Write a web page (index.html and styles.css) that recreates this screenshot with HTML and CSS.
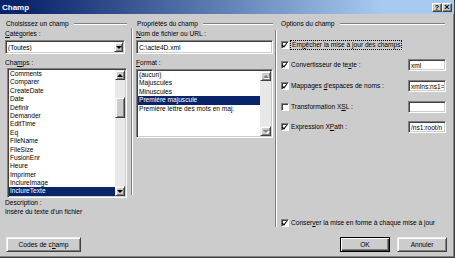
FILE: index.html
```html
<!DOCTYPE html>
<html lang="fr">
<head>
  <meta charset="UTF-8">
  <title>Champ</title>
  <link rel="stylesheet" href="styles.css">
</head>
<body>
  <div class="dialog">
    <div class="titlebar">
      <span class="title">Champ</span>
      <span class="cap-btn">?</span>
      <span class="cap-btn cap-close">×</span>
    </div>

    <div class="content">
      <div class="columns">
        <!-- Choisissez un champ -->
        <div class="col col-left">
          <div class="group-head"><span>Choisissez un champ</span><span class="rule"></span></div>
          <div class="label"><u>C</u>atégories :</div>
          <div class="field select">
            <span class="field-text">(Toutes)</span>
            <span class="btn3d arrow-btn"><span class="tri tri-down"></span></span>
          </div>
          <div class="label label-gap">Cha<u>m</u>ps :</div>
          <div class="listbox list-fields">
            <ul class="items">
              <li>Comments</li>
              <li>Comparer</li>
              <li>CreateDate</li>
              <li>Date</li>
              <li>Définir</li>
              <li>Demander</li>
              <li>EditTime</li>
              <li>Eq</li>
              <li>FileName</li>
              <li>FileSize</li>
              <li>FusionEnr</li>
              <li>Heure</li>
              <li>Imprimer</li>
              <li>InclureImage</li>
              <li class="selected">InclureTexte</li>
            </ul>
            <div class="scrollbar">
              <span class="btn3d sb-btn"><span class="tri tri-up"></span></span>
              <div class="track"><span class="btn3d thumb"></span></div>
              <span class="btn3d sb-btn"><span class="tri tri-down"></span></span>
            </div>
          </div>
          <div class="desc">Description :</div>
          <div class="desc">Insère du texte d'un fichier</div>
        </div>

        <div class="sep sep-left"></div>

        <!-- Propriétés du champ -->
        <div class="col col-mid">
          <div class="group-head"><span>Propriétés du champ</span><span class="rule"></span></div>
          <div class="label"><u>N</u>om de fichier ou URL :</div>
          <div class="field textbox">
            <span class="field-text">C:\acte4D.xml</span>
          </div>
          <div class="label label-gap"><u>F</u>ormat :</div>
          <div class="listbox list-format">
            <ul class="items">
              <li>(aucun)</li>
              <li>Majuscules</li>
              <li>Minuscules</li>
              <li class="selected">Première majuscule</li>
              <li>Première lettre des mots en maj.</li>
            </ul>
            <div class="scrollbar">
              <span class="btn3d sb-btn"><span class="tri tri-up off"></span></span>
              <div class="track"></div>
              <span class="btn3d sb-btn"><span class="tri tri-down off"></span></span>
            </div>
          </div>
        </div>

        <div class="sep sep-right"></div>

        <!-- Options du champ -->
        <div class="col col-right">
          <div class="group-head"><span>Options du champ</span><span class="rule"></span></div>

          <div class="opt opt-first">
            <span class="check on"></span>
            <span class="opt-label focus">Em<u>p</u>êcher la mise à jour des champs</span>
          </div>
          <div class="opt">
            <span class="check on"></span>
            <span class="opt-label">Convertisseur de te<u>x</u>te :</span>
            <span class="field small"><span class="field-text">xml</span></span>
          </div>
          <div class="opt">
            <span class="check on"></span>
            <span class="opt-label">Mappages <u>d</u>'espaces de noms :</span>
            <span class="field small"><span class="field-text">xmlns:ns1=</span></span>
          </div>
          <div class="opt">
            <span class="check"></span>
            <span class="opt-label">Transformation X<u>S</u>L :</span>
            <span class="field small"><span class="field-text"></span></span>
          </div>
          <div class="opt">
            <span class="check on"></span>
            <span class="opt-label">Expression X<u>P</u>ath :</span>
            <span class="field small"><span class="field-text">/ns1:root/n</span></span>
          </div>

          <div class="opt opt-last">
            <span class="check on"></span>
            <span class="opt-label">Conser<u>v</u>er la mise en forme à chaque mise à jour</span>
          </div>
        </div>
      </div>

      <div class="footer">
        <span class="btn3d button btn-codes">Codes de c<u>h</u>amp</span>
        <span class="btn3d button btn-default">OK</span>
        <span class="btn3d button btn-cancel">Annuler</span>
      </div>
    </div>
  </div>
</body>
</html>
```

FILE: styles.css
```css
* {
  box-sizing: border-box;
}

body {
  margin: 0;
  background: #cccccc;
  font-family: "Liberation Sans", Arial, sans-serif;
  font-size: 6.6px;
  color: #000;
}

u {
  text-decoration-thickness: 1px;
  text-underline-offset: 1px;
}

.dialog {
  width: 455px;
  height: 258px;
  background: #cccccc;
  border-right: 1px solid #404040;
  border-bottom: 1px solid #404040;
  box-shadow: inset -1px -1px #808080;
  display: flex;
  flex-direction: column;
}

/* title bar */
.titlebar {
  height: 14px;
  flex-shrink: 0;
  display: flex;
  align-items: center;
  padding: 0 2px 0 2px;
  background: linear-gradient(to right, #0a246a 5%, #a6caf0 84%);
}

.title {
  flex: 1;
  color: #fff;
  font-weight: bold;
  font-size: 8px;
}

.cap-btn {
  width: 10px;
  height: 9px;
  background: #cccccc;
  border: 1px solid;
  border-color: #fff #404040 #404040 #fff;
  box-shadow: inset -1px -1px #808080;
  font-weight: bold;
  font-size: 7px;
  line-height: 7px;
  text-align: center;
}

.cap-close {
  font-size: 9px;
}

/* content */
.content {
  padding: 5px 7px 0 5px;
}

.columns {
  display: flex;
  height: 209px;
}

.col {
  display: flex;
  flex-direction: column;
}

.col-left {
  width: 123px;
}

.col-mid {
  width: 137px;
  margin-left: 3px;
}

.col-right {
  flex: 1;
  margin-left: 3px;
}

.sep {
  width: 2px;
  border-left: 1px solid #808080;
  border-right: 1px solid #fff;
  align-self: flex-start;
}

.sep-left {
  margin-left: 3px;
  margin-top: 9px;
  height: 167px;
}

.sep-right {
  margin-left: 2px;
  margin-top: 11px;
  height: 197px;
}

.group-head {
  display: flex;
  align-items: center;
  height: 9px;
  line-height: 9px;
  padding-left: 1px;
}

.rule {
  flex: 1;
  height: 2px;
  margin-left: 5px;
  border-top: 1px solid #808080;
  border-bottom: 1px solid #fff;
}

.col-left .rule {
  margin-right: 1px;
}

.col-right .rule {
  margin-right: 2px;
}

.label {
  line-height: 9px;
  margin-top: 1px;
}

.label-gap {
  margin-top: 4px;
}

/* sunken fields */
.field {
  display: flex;
  align-items: center;
  background: #fff;
  border: 1px solid;
  border-color: #808080 #fff #fff #808080;
  box-shadow: inset 1px 1px #404040, inset -1px -1px #cccccc;
  padding: 1px;
  overflow: hidden;
  white-space: nowrap;
}

.field-text {
  flex: 1;
  padding-left: 1px;
  overflow: hidden;
}

.select {
  width: 120px;
  height: 14px;
  margin-top: 2px;
}

.textbox {
  width: 137px;
  height: 14px;
  margin-top: 2px;
}

.small {
  width: 38px;
  height: 12px;
  margin-left: auto;
  margin-right: 1px;
}

/* raised 3d parts */
.btn3d {
  display: flex;
  align-items: center;
  justify-content: center;
  background: #cccccc;
  border: 1px solid;
  border-color: #eeeeee #404040 #404040 #eeeeee;
  box-shadow: inset 1px 1px #fff, inset -1px -1px #808080;
}

.arrow-btn {
  width: 9px;
  height: 10px;
}

.tri {
  width: 0;
  height: 0;
  border-left: 3px solid transparent;
  border-right: 3px solid transparent;
}

.tri-down {
  border-top: 3px solid #000;
}

.tri-up {
  border-bottom: 3px solid #000;
}

.tri-down.off {
  border-top-color: #808080;
  filter: drop-shadow(1px 1px 0 #fff);
}

.tri-up.off {
  border-bottom-color: #808080;
  filter: drop-shadow(1px 1px 0 #fff);
}

/* list boxes */
.listbox {
  display: flex;
  background: #fff;
  border: 1px solid;
  border-color: #808080 #fff #fff #808080;
  box-shadow: inset 1px 1px #404040, inset -1px -1px #cccccc;
  padding: 1px;
}

.list-fields {
  width: 120px;
  height: 130px;
  margin-top: 1px;
  margin-left: 2px;
}

.list-format {
  width: 137px;
  height: 69px;
  margin-top: 2px;
}

.items {
  flex: 1;
  list-style: none;
  margin: 0;
  padding: 0;
  overflow: hidden;
  white-space: nowrap;
}

.items li {
  height: 8.4px;
  line-height: 8.4px;
  padding-left: 1px;
}

.items li.selected {
  background: #0a246a;
  color: #fff;
}

.scrollbar {
  display: flex;
  flex-direction: column;
  width: 10px;
}

.list-format .scrollbar {
  width: 11px;
}

.sb-btn {
  height: 10px;
  flex-shrink: 0;
}

.track {
  flex: 1;
  background: #e8e8e8;
}

.thumb {
  height: 21px;
  margin-top: 17px;
}

.desc {
  line-height: 9px;
}

/* option rows */
.opt {
  display: flex;
  align-items: center;
  height: 20.7px;
  white-space: nowrap;
}

.opt-first {
  margin-top: 6px;
  height: 21px;
}

.opt-last {
  margin-top: auto;
  height: 10px;
}

.check {
  position: relative;
  width: 8px;
  height: 8px;
  margin-left: 1px;
  flex-shrink: 0;
  background: #fff;
  border: 1px solid;
  border-color: #808080 #fff #fff #808080;
  box-shadow: inset 1px 1px #404040;
}

.check.on::after {
  content: "";
  position: absolute;
  left: 1px;
  top: 0;
  width: 2px;
  height: 4px;
  border-right: 1.3px solid #000;
  border-bottom: 1.3px solid #000;
  transform: rotate(40deg);
}

.opt-label {
  margin-left: 2px;
  line-height: 8px;
}

.focus {
  margin-left: 1px;
  padding: 0 1px;
  border: 1px dotted #000;
}

/* footer buttons */
.footer {
  display: flex;
  margin-top: 9px;
  padding-left: 1px;
}

.button {
  height: 15px;
  white-space: nowrap;
}

.btn-codes {
  width: 75px;
  margin-right: auto;
}

.btn-default {
  width: 50px;
  border-color: #000;
  box-shadow: inset 1px 1px #fff, inset -1px -1px #404040, inset -2px -2px #808080;
}

.btn-cancel {
  width: 50px;
  margin-left: 7px;
}
```
